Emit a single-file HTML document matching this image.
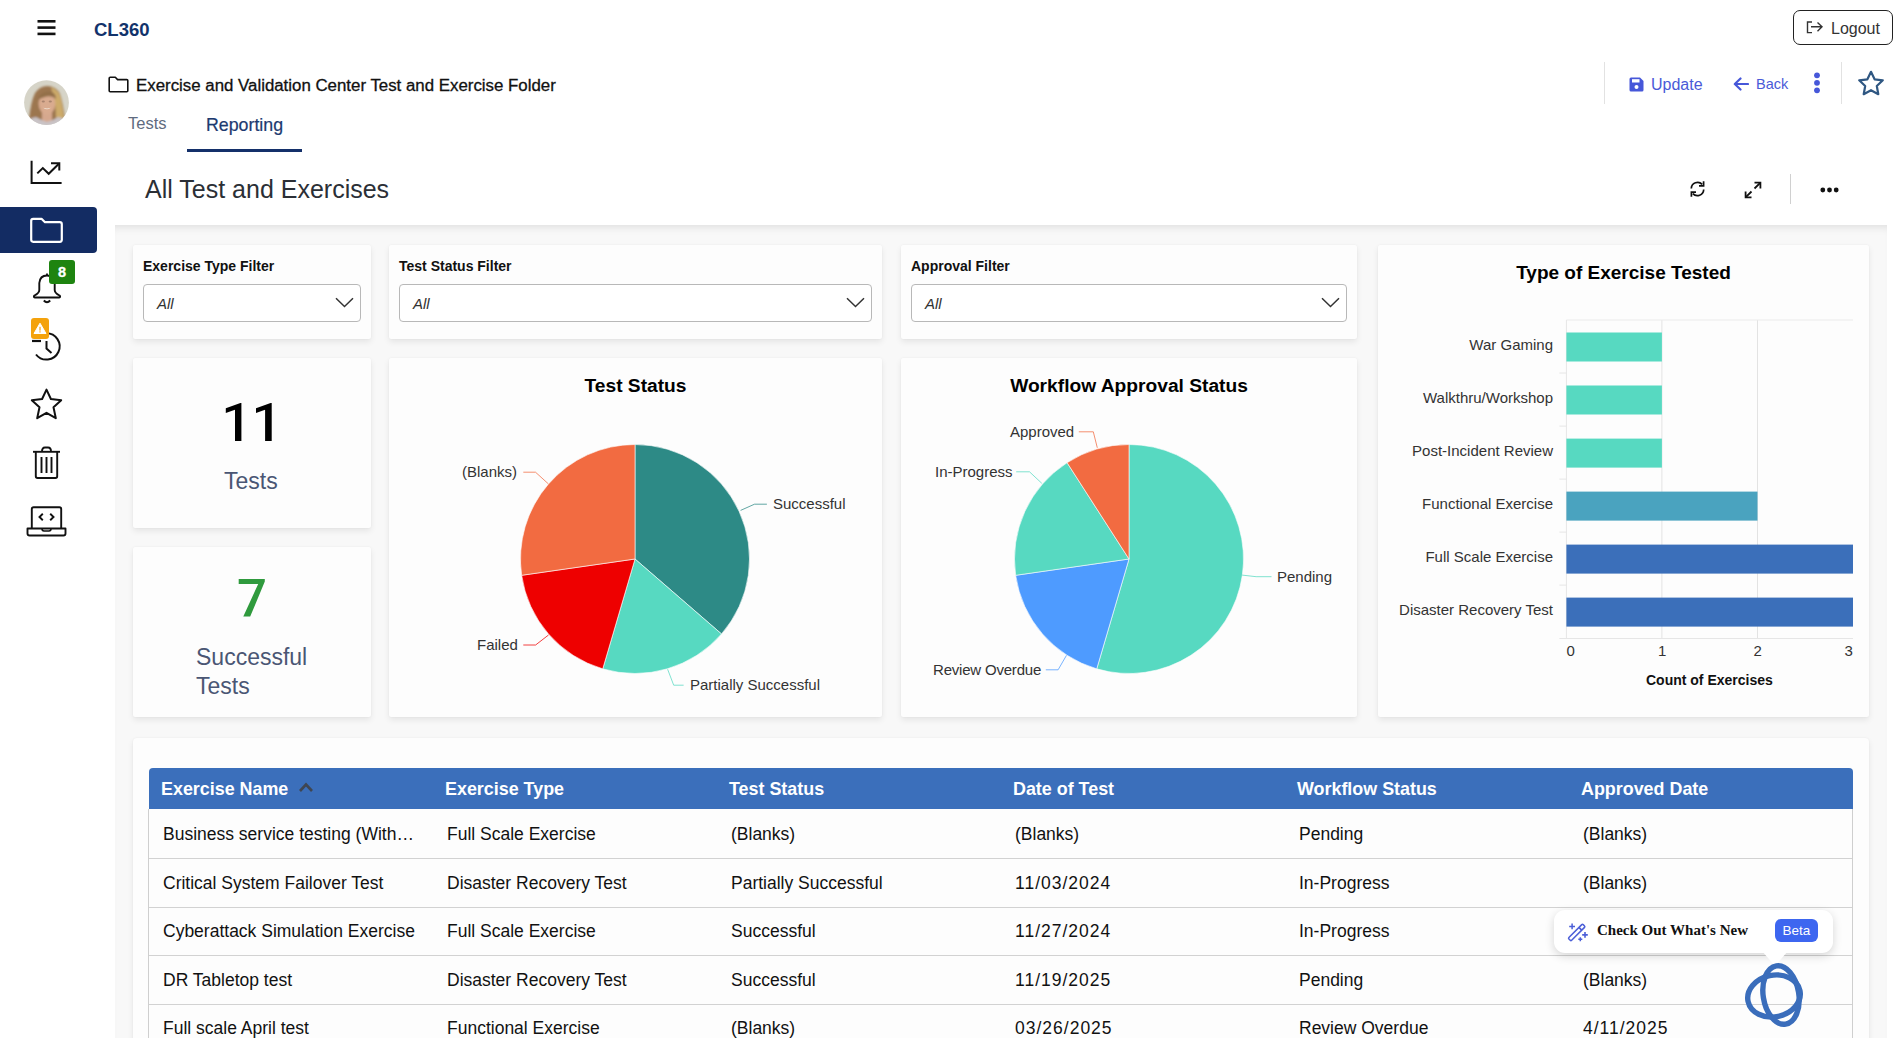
<!DOCTYPE html>
<html><head><meta charset="utf-8">
<style>
*{box-sizing:border-box}
html,body{margin:0;padding:0}
body{width:1898px;height:1038px;overflow:hidden;position:relative;background:#fff;font-family:"Liberation Sans",sans-serif;color:#222}
.a{position:absolute}
.nw{white-space:nowrap}
svg{display:block}
.card{position:absolute;background:#fdfdfd;border-radius:2px;box-shadow:0 3px 6px rgba(0,0,0,0.08),0 0 2px rgba(0,0,0,0.05)}
.flabel{position:absolute;left:10px;top:12.5px;font-size:14px;font-weight:700;color:#111;white-space:nowrap}
.sel{position:absolute;left:10px;top:39px;height:38px;border:1px solid #b8b8b8;border-radius:4px;background:#fff}
.sel .v{position:absolute;left:13px;top:10px;font-size:15px;font-style:italic;color:#333}
.sel svg{position:absolute;right:6px;top:12px}
.ctitle{position:absolute;left:0;right:0;text-align:center;font-weight:700;color:#000;white-space:nowrap}
.plab{position:absolute;font-size:15px;color:#333;white-space:nowrap}
</style></head>
<body>

<!-- ===== Header ===== -->
<svg class="a" style="left:37px;top:19px" width="19" height="17" viewBox="0 0 19 17">
 <rect x="0.5" y="1" width="18" height="2.6" fill="#111"/>
 <rect x="0.5" y="7.3" width="18" height="2.6" fill="#111"/>
 <rect x="0.5" y="13.6" width="18" height="2.6" fill="#111"/>
</svg>
<div class="a nw" style="left:94px;top:19px;font-size:18.5px;font-weight:700;color:#12336b">CL360</div>

<div class="a" style="left:1793px;top:10px;width:100px;height:35px;border:1.3px solid #222;border-radius:7px"></div>
<svg class="a" style="left:1806px;top:20px" width="18" height="14" viewBox="0 0 18 14">
 <path d="M6 2H1.5V12.6H6" fill="none" stroke="#333" stroke-width="1.4"/>
 <path d="M5 6.8H15.5M11.5 2.5L16 6.8L11.5 11.2" fill="none" stroke="#333" stroke-width="1.4"/>
</svg>
<div class="a nw" style="left:1831px;top:20px;font-size:16px;color:#333">Logout</div>

<!-- ===== Sidebar ===== -->
<!-- avatar -->
<svg class="a" style="left:23px;top:79px" width="47" height="47" viewBox="0 0 47 47">
 <defs><clipPath id="av"><circle cx="23.5" cy="23.6" r="22.4"/></clipPath>
 <filter id="bl" x="-20%" y="-20%" width="140%" height="140%"><feGaussianBlur stdDeviation="0.9"/></filter></defs>
 <g clip-path="url(#av)">
  <rect width="47" height="47" fill="#d6d4c8"/>
  <g filter="url(#bl)">
  <path d="M6 40Q8 22 12 14Q17 7 24 7Q33 7 37 15Q40 24 42 40Q30 46 6 40Z" fill="#9c7650"/>
  <path d="M28 8Q36 11 38 20Q40 30 41 40Q36 42 33 38Q33 26 30 16Z" fill="#cdab6a"/>
  <path d="M19 30H29V44H19Z" fill="#d6a88e"/>
  <ellipse cx="24" cy="24.5" rx="8.4" ry="10.8" fill="#d9ab8f"/>
  <path d="M15 19Q20 11 29 13Q33 15 33 20Q27 14 15 21Z" fill="#93704a"/>
  <path d="M2 47Q4 39 13 38Q18 41 24 43Q31 41 35 38Q44 39 46 47Z" fill="#c9c3c6"/>
  </g>
  <ellipse cx="20.3" cy="22.5" rx="1.6" ry="0.9" fill="#8a6a5a" opacity="0.6"/>
  <ellipse cx="27.3" cy="22.5" rx="1.6" ry="0.9" fill="#8a6a5a" opacity="0.6"/>
  <path d="M20.2 28.8Q24 31.8 27.8 28.8Q24 30.2 20.2 28.8Z" fill="#f4e8dc"/>
 </g>
</svg>
<!-- analytics -->
<svg class="a" style="left:30px;top:160px" width="33" height="25" viewBox="0 0 33 25">
 <path d="M1.6 0.8V23H31.6" fill="none" stroke="#111" stroke-width="2"/>
 <path d="M7.3 13.4L12.8 8.1L18.7 13.8L28.6 4" fill="none" stroke="#111" stroke-width="2"/>
 <path d="M21 3.2H29.3V10.6" fill="none" stroke="#111" stroke-width="2"/>
</svg>
<!-- active folder -->
<div class="a" style="left:0;top:207px;width:97px;height:46px;background:#132c63;border-radius:0 4px 4px 0"></div>
<svg class="a" style="left:29px;top:217px" width="35" height="27" viewBox="0 0 35 27">
 <path d="M2.2 3.8Q2.2 1.8 4.2 1.8H12.5L16 5.2H30.8Q32.8 5.2 32.8 7.2V22.8Q32.8 24.8 30.8 24.8H4.2Q2.2 24.8 2.2 22.8Z" fill="none" stroke="#fff" stroke-width="2.2" stroke-linejoin="round"/>
</svg>
<!-- bell -->
<svg class="a" style="left:32px;top:270px" width="30" height="36" viewBox="0 0 30 36">
 <path d="M15 3.5V5.5" stroke="#111" stroke-width="1.8"/>
 <path d="M15 5.5Q8 5.5 7.3 13V20Q7.3 23 2.5 25.5Q1 27 3 27.5H27Q29 27 27.5 25.5Q22.7 23 22.7 20V13Q22 5.5 15 5.5Z" fill="none" stroke="#111" stroke-width="1.9" stroke-linejoin="round"/>
 <path d="M11.8 30.5Q15 34 18.2 30.5" fill="none" stroke="#111" stroke-width="1.9"/>
</svg>
<div class="a" style="left:49px;top:260px;width:26px;height:24px;background:#1e8410;border-radius:3px;color:#fff;font-weight:700;font-size:14.5px;text-align:center;line-height:24px;-webkit-text-stroke:0.3px #fff">8</div>
<!-- history -->
<svg class="a" style="left:30px;top:328px" width="36" height="36" viewBox="0 0 36 36">
 <path d="M16 5.2A13.2 13.2 0 1 1 6 26.5" fill="none" stroke="#111" stroke-width="2"/>
 <path d="M16.5 13V20.5L21.5 25" fill="none" stroke="#111" stroke-width="2"/>
 <path d="M2 13H11" stroke="#111" stroke-width="2.2"/>
</svg>
<div class="a" style="left:31px;top:318px;width:18px;height:21px;background:#f4a20c;border-radius:3px"></div>
<svg class="a" style="left:33px;top:322px" width="14" height="13" viewBox="0 0 14 13">
 <path d="M7 1.2L13 11.5H1Z" fill="#fff" stroke="#fff" stroke-width="1" stroke-linejoin="round"/>
 <rect x="6.4" y="4.8" width="1.2" height="3.8" fill="#f4a20c"/>
 <rect x="6.4" y="9.3" width="1.2" height="1.2" fill="#f4a20c"/>
</svg>
<!-- star -->
<svg class="a" style="left:29px;top:388px" width="35" height="33" viewBox="0 0 35 33">
 <path d="M17.5 1.6L21.9 11L32.2 12.2L24.5 19.2L26.8 30.2L17.5 24.8L8.2 30.2L10.5 19.2L2.8 12.2L13.1 11Z" fill="none" stroke="#111" stroke-width="2" stroke-linejoin="round"/>
</svg>
<!-- trash -->
<svg class="a" style="left:32px;top:446px" width="29" height="34" viewBox="0 0 29 34">
 <path d="M1 5.8H28" stroke="#111" stroke-width="1.9"/>
 <path d="M10 5.5Q10 1.5 13 1.5H16Q19 1.5 19 5.5" fill="none" stroke="#111" stroke-width="1.9"/>
 <path d="M3.8 5.8V30.3Q3.8 32 5.5 32H23.5Q25.2 32 25.2 30.3V5.8" fill="none" stroke="#111" stroke-width="1.9"/>
 <path d="M9.5 11V27M14.5 11V27M19.5 11V27" stroke="#111" stroke-width="1.9"/>
</svg>
<!-- laptop code -->
<svg class="a" style="left:26px;top:506px" width="41" height="31" viewBox="0 0 41 31">
 <path d="M5.8 22.5V3Q5.8 1.2 7.6 1.2H33.4Q35.2 1.2 35.2 3V22.5" fill="none" stroke="#111" stroke-width="1.9"/>
 <path d="M1.5 22.5H39.5V27.5Q39.5 29.5 37.5 29.5H3.5Q1.5 29.5 1.5 27.5Z" fill="none" stroke="#111" stroke-width="1.9" stroke-linejoin="round"/>
 <path d="M16 22.8Q16 25 18 25H23Q25 25 25 22.8" fill="none" stroke="#111" stroke-width="1.6"/>
 <path d="M16.8 7.8L13.5 11L16.8 14.2M24.2 7.8L27.5 11L24.2 14.2" fill="none" stroke="#111" stroke-width="1.9"/>
</svg>


<!-- ===== Title / tabs ===== -->
<svg class="a" style="left:108px;top:76px" width="21" height="17" viewBox="0 0 21 17">
 <path d="M1.2 2.2Q1.2 1.2 2.2 1.2H7.3L9.6 3.6H18.8Q19.8 3.6 19.8 4.6V14.8Q19.8 15.8 18.8 15.8H2.2Q1.2 15.8 1.2 14.8Z" fill="none" stroke="#111" stroke-width="1.6" stroke-linejoin="round"/>
</svg>
<div class="a nw" style="left:136px;top:76px;font-size:16.85px;color:#111;-webkit-text-stroke:0.3px #111">Exercise and Validation Center Test and Exercise Folder</div>

<div class="a nw" style="left:128px;top:114px;font-size:16.5px;color:#5f6b80">Tests</div>
<div class="a nw" style="left:206px;top:115px;font-size:17.8px;color:#1d3a70;-webkit-text-stroke:0.2px #1d3a70">Reporting</div>
<div class="a" style="left:187px;top:149px;width:115px;height:3px;background:#14306a"></div>

<div class="a" style="left:1604px;top:62px;width:1px;height:42px;background:#e2e2e2"></div>
<svg class="a" style="left:1629px;top:77px" width="15" height="15" viewBox="0 0 15 15">
 <path d="M0.5 2Q0.5 0.5 2 0.5H11L14.5 4V13Q14.5 14.5 13 14.5H2Q0.5 14.5 0.5 13Z" fill="#4657d9"/>
 <rect x="3" y="2.2" width="7.5" height="3.3" fill="#fff"/>
 <circle cx="7.5" cy="10" r="2" fill="#fff"/>
</svg>
<div class="a nw" style="left:1651px;top:76px;font-size:16px;color:#4a5ad8">Update</div>
<svg class="a" style="left:1733px;top:77px" width="16" height="14" viewBox="0 0 16 14">
 <path d="M15 7H2.5M7.5 1.5L1.8 7L7.5 12.5" fill="none" stroke="#4657d9" stroke-width="2.2" stroke-linejoin="round" stroke-linecap="round"/>
</svg>
<div class="a nw" style="left:1756px;top:76px;font-size:14.5px;color:#4a5ad8">Back</div>
<svg class="a" style="left:1813px;top:72px" width="8" height="22" viewBox="0 0 8 22">
 <circle cx="4" cy="3.3" r="2.9" fill="#4657d9"/><circle cx="4" cy="10.8" r="2.9" fill="#4657d9"/><circle cx="4" cy="18.3" r="2.9" fill="#4657d9"/>
</svg>
<div class="a" style="left:1841px;top:62px;width:1px;height:42px;background:#e2e2e2"></div>
<svg class="a" style="left:1857px;top:70px" width="28" height="27" viewBox="0 0 28 27">
 <path d="M14 1.8L17.6 9.3L25.8 10.3L19.8 16L21.3 24.2L14 20.2L6.7 24.2L8.2 16L2.2 10.3L10.4 9.3Z" fill="none" stroke="#2f5782" stroke-width="2.2" stroke-linejoin="round"/>
</svg>


<!-- ===== Section heading ===== -->
<div class="a nw" style="left:145px;top:175px;font-size:25px;color:#2b2f36">All Test and Exercises</div>
<svg class="a" style="left:1689px;top:180px" width="17" height="18" viewBox="0 0 17 18">
 <path d="M2.3 8.5A6.3 6.3 0 0 1 13.2 4.4" fill="none" stroke="#111" stroke-width="1.7"/>
 <path d="M14.7 9.5A6.3 6.3 0 0 1 3.8 13.6" fill="none" stroke="#111" stroke-width="1.7"/>
 <path d="M14.6 1.2V5.8H10" fill="none" stroke="#111" stroke-width="1.7"/>
 <path d="M2.4 16.8V12.2H7" fill="none" stroke="#111" stroke-width="1.7"/>
</svg>
<svg class="a" style="left:1744px;top:181px" width="18" height="18" viewBox="0 0 18 18">
 <path d="M16.2 1.8L10.5 7.5M1.8 16.2L7.5 10.5" stroke="#111" stroke-width="1.8"/>
 <path d="M10.5 1.6H16.4V7.5M7.5 16.4H1.6V10.5" fill="none" stroke="#111" stroke-width="1.8"/>
</svg>
<div class="a" style="left:1790px;top:174px;width:1px;height:30px;background:#d0d0d0"></div>
<svg class="a" style="left:1820px;top:187px" width="19" height="6" viewBox="0 0 19 6">
 <circle cx="2.8" cy="3" r="2.4" fill="#111"/><circle cx="9.5" cy="3" r="2.4" fill="#111"/><circle cx="16.2" cy="3" r="2.4" fill="#111"/>
</svg>


<!-- ===== Dashboard container ===== -->
<div class="a" style="left:115px;top:225px;width:1772px;height:813px;background:#f8f8f8;box-shadow:inset 0 8px 8px -6px rgba(0,0,0,0.11)"></div>

<!--CARDS-->
<div class="card" style="left:133px;top:245px;width:238px;height:94px;"><div class="flabel">Exercise Type Filter</div><div class="sel" style="width:218px"><div class="v">All</div><svg width="19" height="11" viewBox="0 0 19 11"><path d="M1 1.2L9.5 9.5L18 1.2" fill="none" stroke="#333" stroke-width="1.5"/></svg></div></div>
<div class="card" style="left:389px;top:245px;width:493px;height:94px;"><div class="flabel">Test Status Filter</div><div class="sel" style="width:473px"><div class="v">All</div><svg width="19" height="11" viewBox="0 0 19 11"><path d="M1 1.2L9.5 9.5L18 1.2" fill="none" stroke="#333" stroke-width="1.5"/></svg></div></div>
<div class="card" style="left:901px;top:245px;width:456px;height:94px;"><div class="flabel">Approval Filter</div><div class="sel" style="width:436px"><div class="v">All</div><svg width="19" height="11" viewBox="0 0 19 11"><path d="M1 1.2L9.5 9.5L18 1.2" fill="none" stroke="#333" stroke-width="1.5"/></svg></div></div>
<div class="card" style="left:133px;top:358px;width:238px;height:170px;"><svg class="a" style="left:0;top:0" width="238" height="170" viewBox="133 358 238 170"><path d="M241.4 402.9V440.9H235V409.8L225.8 412.9V408.2L240.4 402.9Z M271.7 402.9V440.9H265.1V409.8L256 412.9V408.2L270.6 402.9Z" fill="#000"/></svg><div class="a nw" style="left:91px;top:110px;font-size:23px;color:#4a5674">Tests</div></div>
<div class="card" style="left:133px;top:547px;width:238px;height:170px;"><svg class="a" style="left:0;top:0" width="238" height="170" viewBox="133 547 238 170"><path d="M238.7 579H264.8V581.6L250.2 616.6H243.3L258.2 583.9H238.7Z" fill="#2f9a3d"/></svg><div class="a" style="left:63px;top:96px;font-size:23px;line-height:28.5px;color:#4a5674;width:130px">Successful<br>Tests</div></div>
<div class="card" style="left:389px;top:358px;width:493px;height:359px;"><div class="ctitle" style="top:17px;font-size:19.2px">Test Status</div><svg class="a" style="left:0;top:0" width="493" height="359" viewBox="0 0 493 359">
<path d="M246.00 201.00L246.00 86.50A114.5 114.5 0 0 1 332.53 275.98Z" fill="#2d8a86" stroke="#fdfdfd" stroke-width="0.6"/>
<path d="M246.00 201.00L332.53 275.98A114.5 114.5 0 0 1 213.74 310.86Z" fill="#57d9c1" stroke="#fdfdfd" stroke-width="0.6"/>
<path d="M246.00 201.00L213.74 310.86A114.5 114.5 0 0 1 132.67 217.30Z" fill="#ee0000" stroke="#fdfdfd" stroke-width="0.6"/>
<path d="M246.00 201.00L132.67 217.30A114.5 114.5 0 0 1 246.00 86.50Z" fill="#f26b41" stroke="#fdfdfd" stroke-width="0.6"/>
<path d="M351.6 152.4L365.5 146.2L377.9 146.2" fill="none" stroke="#2d8a86" stroke-width="1" stroke-opacity="0.75"/>
<path d="M278.6 311.2L284.7 327.2L294.6 327.2" fill="none" stroke="#57d9c1" stroke-width="1" stroke-opacity="0.75"/>
<path d="M159.5 277.0L146.6 287.0L134.3 287.0" fill="none" stroke="#ee0000" stroke-width="1" stroke-opacity="0.75"/>
<path d="M159.3 125.8L146.5 114.2L134.3 114.2" fill="none" stroke="#f26b41" stroke-width="1" stroke-opacity="0.75"/>
</svg><div class="plab" style="left:384px;top:137px">Successful</div><div class="plab" style="left:301px;top:318px">Partially Successful</div><div class="plab" style="left:88px;top:278px">Failed</div><div class="plab" style="left:73px;top:105px">(Blanks)</div></div>
<div class="card" style="left:901px;top:358px;width:456px;height:359px;"><div class="ctitle" style="top:17px;font-size:19.2px">Workflow Approval Status</div><svg class="a" style="left:0;top:0" width="456" height="359" viewBox="0 0 456 359">
<path d="M228.00 201.00L228.00 86.50A114.5 114.5 0 1 1 195.74 310.86Z" fill="#57d9c1" stroke="#fdfdfd" stroke-width="0.6"/>
<path d="M228.00 201.00L195.74 310.86A114.5 114.5 0 0 1 114.67 217.30Z" fill="#4e9bff" stroke="#fdfdfd" stroke-width="0.6"/>
<path d="M228.00 201.00L114.67 217.30A114.5 114.5 0 0 1 166.10 104.68Z" fill="#57d9c1" stroke="#fdfdfd" stroke-width="0.6"/>
<path d="M228.00 201.00L166.10 104.68A114.5 114.5 0 0 1 228.00 86.50Z" fill="#f26b41" stroke="#fdfdfd" stroke-width="0.6"/>
<path d="M196.3 89.8L192.3 73.8L177.8 73.8" fill="none" stroke="#f26b41" stroke-width="1" stroke-opacity="0.75"/>
<path d="M140.8 125.3L128.5 113.8L115.2 113.8" fill="none" stroke="#57d9c1" stroke-width="1" stroke-opacity="0.75"/>
<path d="M341.2 217.1L355.1 218.7L370.5 218.7" fill="none" stroke="#57d9c1" stroke-width="1" stroke-opacity="0.75"/>
<path d="M165.5 297.3L157.1 311.8L144.8 311.8" fill="none" stroke="#4e9bff" stroke-width="1" stroke-opacity="0.75"/>
</svg><div class="plab" style="left:109px;top:65px;">Approved</div><div class="plab" style="left:34px;top:105px;">In-Progress</div><div class="plab" style="left:376px;top:210px;">Pending</div><div class="plab" style="left:32px;top:303px;letter-spacing:-0.2px">Review Overdue</div></div>
<div class="card" style="left:1378px;top:245px;width:491px;height:472px;"><div class="ctitle" style="top:17px;font-size:19px">Type of Exercise Tested</div><svg class="a" style="left:0;top:0" width="491" height="472" viewBox="0 0 491 472"><path d="M283.9 75V393" stroke="#e3e3e3" stroke-width="1"/><path d="M379.5 75V393" stroke="#e3e3e3" stroke-width="1"/><path d="M188.4 75H475" stroke="#ebebeb" stroke-width="1"/><path d="M188.4 75V393" stroke="#e6e6e6" stroke-width="1"/><path d="M181.4 393.5H475" stroke="#e6e6e6" stroke-width="1"/><path d="M181.4 128.0H188.4" stroke="#e6e6e6" stroke-width="1"/><path d="M181.4 181.1H188.4" stroke="#e6e6e6" stroke-width="1"/><path d="M181.4 234.1H188.4" stroke="#e6e6e6" stroke-width="1"/><path d="M181.4 287.1H188.4" stroke="#e6e6e6" stroke-width="1"/><path d="M181.4 340.1H188.4" stroke="#e6e6e6" stroke-width="1"/><rect x="188.4" y="87.5" width="95.5" height="29" fill="#57d9c1"/><rect x="188.4" y="140.5" width="95.5" height="29" fill="#57d9c1"/><rect x="188.4" y="193.6" width="95.5" height="29" fill="#57d9c1"/><rect x="188.4" y="246.6" width="191.1" height="29" fill="#4aa3bf"/><rect x="188.4" y="299.6" width="286.6" height="29" fill="#3b6fba"/><rect x="188.4" y="352.6" width="286.6" height="29" fill="#3b6fba"/></svg><div class="plab" style="right:316px;top:91.0px">War Gaming</div><div class="plab" style="right:316px;top:144.0px">Walkthru/Workshop</div><div class="plab" style="right:316px;top:197.1px">Post-Incident Review</div><div class="plab" style="right:316px;top:250.1px">Functional Exercise</div><div class="plab" style="right:316px;top:303.1px">Full Scale Exercise</div><div class="plab" style="right:316px;top:356.1px">Disaster Recovery Test</div><div class="plab" style="left:188.4px;top:397px">0</div><div class="plab" style="left:279.9px;top:397px">1</div><div class="plab" style="left:375.5px;top:397px">2</div><div class="plab" style="left:466.5px;top:397px">3</div><div class="a nw" style="left:268px;top:427px;font-size:14px;font-weight:700;color:#111">Count of Exercises</div></div>
<!--/CARDS-->
<!--TABLE-->
<div class="card" style="left:133px;top:738px;width:1736px;height:330px;border-radius:4px 4px 0 0"></div>
<div class="a" style="left:149px;top:768px;width:1704px;height:41px;background:#3b6fbb;border-radius:4px 4px 0 0"></div>
<div class="a nw" style="left:161px;top:779px;font-size:17.9px;font-weight:700;color:#fff">Exercise Name</div>
<div class="a nw" style="left:445px;top:779px;font-size:17.9px;font-weight:700;color:#fff">Exercise Type</div>
<div class="a nw" style="left:729px;top:779px;font-size:17.9px;font-weight:700;color:#fff">Test Status</div>
<div class="a nw" style="left:1013px;top:779px;font-size:17.9px;font-weight:700;color:#fff">Date of Test</div>
<div class="a nw" style="left:1297px;top:779px;font-size:17.9px;font-weight:700;color:#fff">Workflow Status</div>
<div class="a nw" style="left:1581px;top:779px;font-size:17.9px;font-weight:700;color:#fff">Approved Date</div>
<svg class="a" style="left:298px;top:781px" width="16" height="12" viewBox="0 0 16 12"><path d="M2 10L8 3.5L14 10" fill="none" stroke="#3f4652" stroke-width="2.6"/></svg>
<div class="a" style="left:148px;top:809px;width:1px;height:240px;background:#cfcfcf"></div>
<div class="a" style="left:1852px;top:809px;width:1px;height:240px;background:#cfcfcf"></div>
<div class="a nw" style="left:163px;top:824.0px;font-size:17.5px;color:#111;">Business service testing (With…</div>
<div class="a nw" style="left:447px;top:824.0px;font-size:17.5px;color:#111;">Full Scale Exercise</div>
<div class="a nw" style="left:731px;top:824.0px;font-size:17.5px;color:#111;">(Blanks)</div>
<div class="a nw" style="left:1015px;top:824.0px;font-size:17.5px;color:#111;">(Blanks)</div>
<div class="a nw" style="left:1299px;top:824.0px;font-size:17.5px;color:#111;">Pending</div>
<div class="a nw" style="left:1583px;top:824.0px;font-size:17.5px;color:#111;">(Blanks)</div>
<div class="a" style="left:149px;top:858.0px;width:1703px;height:1px;background:#d2d2d2"></div>
<div class="a nw" style="left:163px;top:872.5px;font-size:17.5px;color:#111;">Critical System Failover Test</div>
<div class="a nw" style="left:447px;top:872.5px;font-size:17.5px;color:#111;">Disaster Recovery Test</div>
<div class="a nw" style="left:731px;top:872.5px;font-size:17.5px;color:#111;">Partially Successful</div>
<div class="a nw" style="left:1015px;top:872.5px;font-size:17.5px;color:#111;letter-spacing:1px;">11/03/2024</div>
<div class="a nw" style="left:1299px;top:872.5px;font-size:17.5px;color:#111;">In-Progress</div>
<div class="a nw" style="left:1583px;top:872.5px;font-size:17.5px;color:#111;">(Blanks)</div>
<div class="a" style="left:149px;top:906.5px;width:1703px;height:1px;background:#d2d2d2"></div>
<div class="a nw" style="left:163px;top:921.0px;font-size:17.5px;color:#111;">Cyberattack Simulation Exercise</div>
<div class="a nw" style="left:447px;top:921.0px;font-size:17.5px;color:#111;">Full Scale Exercise</div>
<div class="a nw" style="left:731px;top:921.0px;font-size:17.5px;color:#111;">Successful</div>
<div class="a nw" style="left:1015px;top:921.0px;font-size:17.5px;color:#111;letter-spacing:1px;">11/27/2024</div>
<div class="a nw" style="left:1299px;top:921.0px;font-size:17.5px;color:#111;">In-Progress</div>
<div class="a nw" style="left:1583px;top:921.0px;font-size:17.5px;color:#111;">(Blanks)</div>
<div class="a" style="left:149px;top:955.0px;width:1703px;height:1px;background:#d2d2d2"></div>
<div class="a nw" style="left:163px;top:969.5px;font-size:17.5px;color:#111;">DR Tabletop test</div>
<div class="a nw" style="left:447px;top:969.5px;font-size:17.5px;color:#111;">Disaster Recovery Test</div>
<div class="a nw" style="left:731px;top:969.5px;font-size:17.5px;color:#111;">Successful</div>
<div class="a nw" style="left:1015px;top:969.5px;font-size:17.5px;color:#111;letter-spacing:1px;">11/19/2025</div>
<div class="a nw" style="left:1299px;top:969.5px;font-size:17.5px;color:#111;">Pending</div>
<div class="a nw" style="left:1583px;top:969.5px;font-size:17.5px;color:#111;">(Blanks)</div>
<div class="a" style="left:149px;top:1003.5px;width:1703px;height:1px;background:#d2d2d2"></div>
<div class="a nw" style="left:163px;top:1018.0px;font-size:17.5px;color:#111;">Full scale April test</div>
<div class="a nw" style="left:447px;top:1018.0px;font-size:17.5px;color:#111;">Functional Exercise</div>
<div class="a nw" style="left:731px;top:1018.0px;font-size:17.5px;color:#111;">(Blanks)</div>
<div class="a nw" style="left:1015px;top:1018.0px;font-size:17.5px;color:#111;letter-spacing:1px;">03/26/2025</div>
<div class="a nw" style="left:1299px;top:1018.0px;font-size:17.5px;color:#111;">Review Overdue</div>
<div class="a nw" style="left:1583px;top:1018.0px;font-size:17.5px;color:#111;letter-spacing:1px;">4/11/2025</div>
<!--/TABLE-->

<!--POPUP-->
<div class="a" style="left:1554px;top:910px;width:279px;height:43px;background:#fff;border-radius:11px;box-shadow:0 3px 10px rgba(0,0,0,0.16)"></div>
<svg class="a" style="left:1762px;top:951px" width="26" height="16" viewBox="0 0 26 16"><path d="M0 0H26L13 15Z" fill="#fff"/></svg>
<svg class="a" style="left:1566px;top:922px" width="23" height="22" viewBox="0 0 23 22">
 <g transform="rotate(-45 10.7 10.45)">
  <rect x="0.6" y="8.5" width="20.2" height="3.9" rx="1" fill="none" stroke="#4c5fd8" stroke-width="1.5"/>
  <path d="M15.8 8.5V12.4" stroke="#4c5fd8" stroke-width="1.7"/>
 </g>
 <path d="M6.1 1.5V7.3M3.2 4.4H9" stroke="#4c5fd8" stroke-width="1.5"/>
 <path d="M19 10.1V15.7M16.2 12.9H21.8" stroke="#4c5fd8" stroke-width="1.6"/>
 <path d="M14.3 15.2V19.2M12.3 17.2H16.3" stroke="#4c5fd8" stroke-width="1.5"/>
</svg>
<div class="a nw" style="left:1597px;top:922px;font-family:'Liberation Serif',serif;font-weight:700;font-size:15px;color:#111">Check Out What's New</div>
<div class="a" style="left:1775px;top:919px;width:43px;height:23px;background:#3d66f0;border-radius:6px;color:#fff;font-size:13.5px;text-align:center;line-height:23px">Beta</div>
<svg class="a" style="left:1735px;top:955px" width="80" height="80" viewBox="1735 955 80 80">
 <ellipse cx="1781" cy="995" rx="17.8" ry="29.5" transform="rotate(-9 1781 995)" fill="none" stroke="#3a6dbb" stroke-width="5.4"/>
 <ellipse cx="1774" cy="996" rx="26.5" ry="20.8" transform="rotate(-12 1774 996)" fill="none" stroke="#3a6dbb" stroke-width="5.4"/>
</svg>
<!--/POPUP-->
</body></html>
